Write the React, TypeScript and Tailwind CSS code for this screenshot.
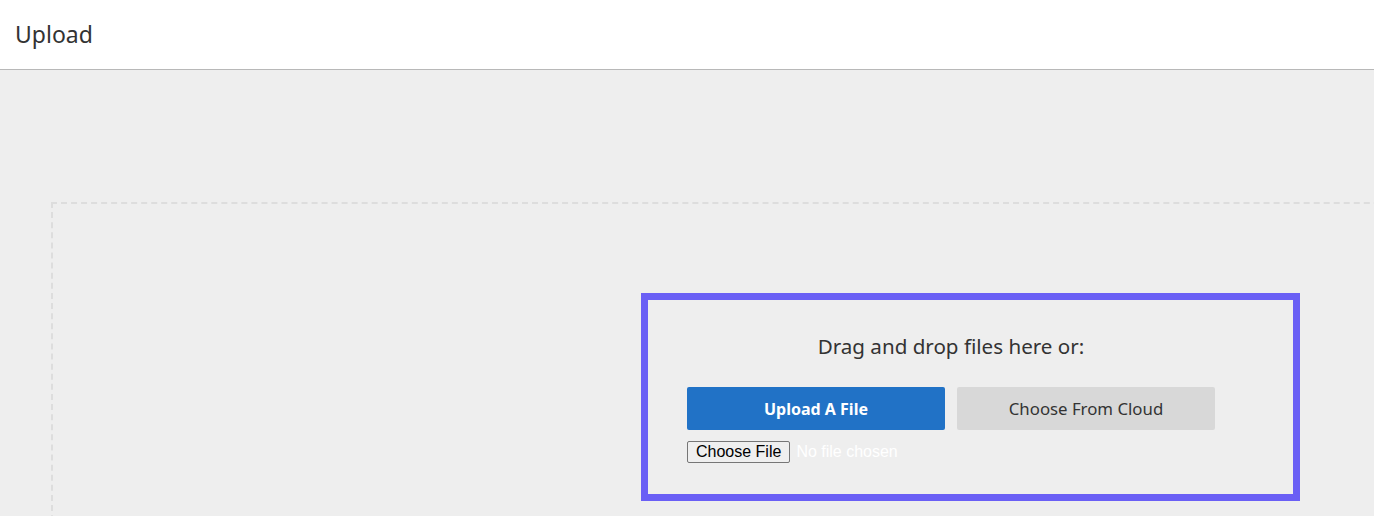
import React from "react";

export default function App() {
  return (
    <div className="min-h-[516px] h-[516px] bg-[#eeeeee] overflow-hidden font-['Noto_Sans',sans-serif]">
      <header className="h-[70px] bg-white border-b border-[#b8b8b8] flex items-center px-[15px]">
        <h1 className="text-[23px] text-[#333333] font-normal">Upload</h1>
      </header>
      <main className="pt-[132px] pl-[51px]">
        <div className="w-[1900px] h-[400px] border-2 border-dashed border-[#dddddd] pt-[89px] pl-[588px]">
          <div className="w-[659px] h-[208px] border-[7px] border-[#6a5ff5] pt-[32px] pl-[39px]">
            <div className="w-[528px]">
              <p className="text-center text-[20.6px] leading-[28px] text-[#333333]">
                Drag and drop files here or:
              </p>
              <div className="mt-[27px] flex gap-[12px]">
                <button className="w-[258px] h-[43px] rounded-[2px] bg-[#2172c6] text-white text-[16px] font-bold">
                  Upload A File
                </button>
                <button className="w-[258px] h-[43px] rounded-[2px] bg-[#d8d8d8] text-[#333333] text-[16.8px]">
                  Choose From Cloud
                </button>
              </div>
              <div className="mt-[11px] flex">
                <input
                  type="file"
                  className="text-white text-[16px] leading-[20px] font-['Liberation_Sans',Arial,sans-serif] file:bg-[#efefef] file:text-black file:border file:border-solid file:border-[#767676] file:rounded-[2px] file:px-[8px] file:py-0 file:mr-[6px] file:h-[22px] file:leading-[20px]"
                />
              </div>
            </div>
          </div>
        </div>
      </main>
    </div>
  );
}
